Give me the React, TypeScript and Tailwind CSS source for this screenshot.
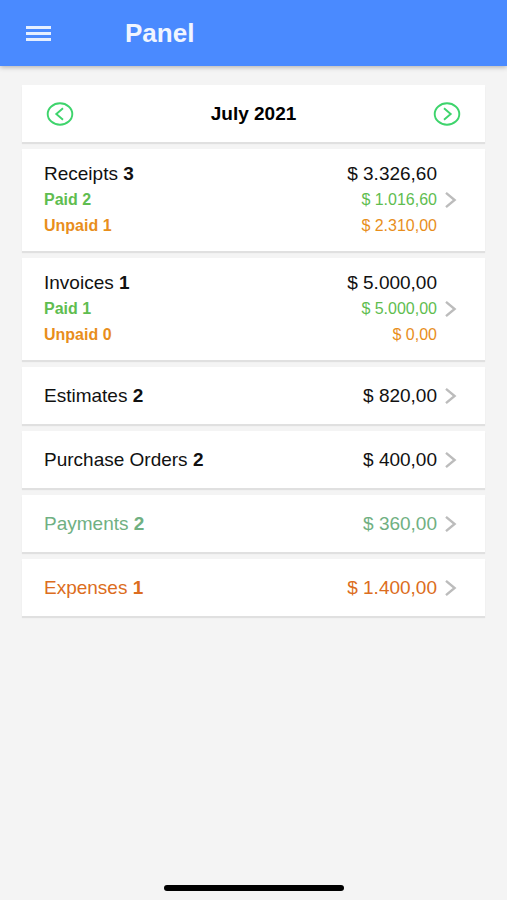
import React from "react";

interface StatusLine {
  label: string;
  count: number;
  amount: string;
  className: string;
}

interface SummaryItem {
  id: string;
  name: string;
  count: number;
  amount: string;
  className: string;
  lines?: StatusLine[];
}

const items: SummaryItem[] = [
  {
    id: "receipts",
    name: "Receipts",
    count: 3,
    amount: "$ 3.326,60",
    className: "text-[#111111]",
    lines: [
      { label: "Paid", count: 2, amount: "$ 1.016,60", className: "text-[#5fbd50]" },
      { label: "Unpaid", count: 1, amount: "$ 2.310,00", className: "text-[#e88e1c]" },
    ],
  },
  {
    id: "invoices",
    name: "Invoices",
    count: 1,
    amount: "$ 5.000,00",
    className: "text-[#111111]",
    lines: [
      { label: "Paid", count: 1, amount: "$ 5.000,00", className: "text-[#5fbd50]" },
      { label: "Unpaid", count: 0, amount: "$ 0,00", className: "text-[#e88e1c]" },
    ],
  },
  { id: "estimates", name: "Estimates", count: 2, amount: "$ 820,00", className: "text-[#111111]" },
  { id: "purchase-orders", name: "Purchase Orders", count: 2, amount: "$ 400,00", className: "text-[#111111]" },
  { id: "payments", name: "Payments", count: 2, amount: "$ 360,00", className: "text-[#70b082]" },
  { id: "expenses", name: "Expenses", count: 1, amount: "$ 1.400,00", className: "text-[#dc6d20]" },
];

function CircleArrow({ direction }: { direction: "left" | "right" }) {
  return (
    <svg width="28" height="24" viewBox="0 0 28 24" fill="none" stroke="#3ed46c" strokeWidth="1.9" aria-hidden="true">
      <ellipse cx="14" cy="12" rx="12.3" ry="10.7" />
      <path d={direction === "left" ? "M17 6.3 L10.3 12 L17 17.7" : "M11 6.3 L17.7 12 L11 17.7"} />
    </svg>
  );
}

function Chevron() {
  return (
    <svg width="12" height="18" viewBox="0 0 12 18" fill="none" stroke="#bcbcbc" strokeWidth="2.4" className="shrink-0" aria-hidden="true">
      <path d="M1 1.8 L9.6 9 L1 16.2" />
    </svg>
  );
}

function SummaryCard({ item }: { item: SummaryItem }) {
  return (
    <a
      href={`#${item.id}`}
      className={`flex items-center gap-2 bg-white pl-[22px] pr-7 shadow-[0_2px_1px_rgba(0,0,0,0.08)] ${
        item.lines ? "py-3" : "pt-4 pb-[15px]"
      }`}
    >
      <div className="flex-1 min-w-0">
        <div className={`flex justify-between text-[19px] leading-[26px] ${item.className}`}>
          <span>
            {item.name} <b>{item.count}</b>
          </span>
          <span>{item.amount}</span>
        </div>
        {item.lines?.map((line) => (
          <div key={line.label} className={`flex justify-between text-base leading-[26px] ${line.className}`}>
            <b>
              {line.label} {line.count}
            </b>
            <span>{line.amount}</span>
          </div>
        ))}
      </div>
      <Chevron />
    </a>
  );
}

export default function App() {
  return (
    <div className="flex flex-col min-h-screen bg-[#f4f4f4] font-['Liberation_Sans',Arial,sans-serif]">
      <header className="flex items-center h-[66px] pl-[26px] bg-[#4a8aff] text-white shadow-[0_1px_5px_rgba(0,0,0,0.3)]">
        <button type="button" aria-label="Open menu" className="flex flex-col gap-[3px] w-[25px]">
          <span className="h-[3px] w-full bg-[#e6efff]" />
          <span className="h-[3px] w-full bg-[#e6efff]" />
          <span className="h-[3px] w-full bg-[#e6efff]" />
        </button>
        <h1 className="ml-[74px] text-[26px] leading-8 font-bold text-[#f0f5ff]">Panel</h1>
      </header>

      <main className="flex flex-col gap-[7px] px-[22px] pt-[19px]">
        <div className="flex items-center justify-between h-[57px] px-6 bg-white shadow-[0_2px_1px_rgba(0,0,0,0.08)]">
          <button type="button" aria-label="Previous month">
            <CircleArrow direction="left" />
          </button>
          <h2 className="text-[19px] leading-[26px] font-bold text-black">July 2021</h2>
          <button type="button" aria-label="Next month">
            <CircleArrow direction="right" />
          </button>
        </div>
        {items.map((item) => (
          <SummaryCard key={item.id} item={item} />
        ))}
      </main>

      <footer className="flex justify-center mt-auto pt-4 pb-[9px]">
        <div className="h-[6px] w-[180px] rounded-full bg-black" />
      </footer>
    </div>
  );
}
